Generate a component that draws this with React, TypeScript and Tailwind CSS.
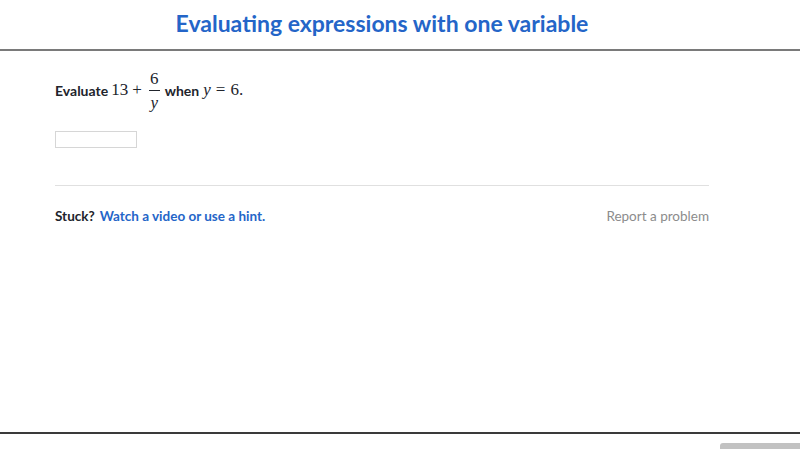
import React from 'react';

const lato = { fontFamily: 'Lato, "Open Sans", sans-serif' };
const serif = { fontFamily: '"Liberation Serif", "DejaVu Serif", serif' };

function Frac({ top, bottom }: { top: string; bottom: string }) {
  return (
    <span className="mx-[3px] inline-flex flex-col items-center align-middle leading-none">
      <span className="pb-[3px]">{top}</span>
      <span className="h-px w-[11px] bg-[#21242c]" />
      <span className="pt-[3px] italic">{bottom}</span>
    </span>
  );
}

export default function App() {
  return (
    <div className="relative h-[449px] w-[800px] overflow-hidden bg-white text-[#21242c]" style={lato}>
      {/* Title bar */}
      <div className="flex h-[51px] items-start justify-center border-b-2 border-[#7a7a7a] pr-[36px] pt-[6px]">
        <h1 className="text-[23px] font-bold text-[#2465c8]">Evaluating expressions with one variable</h1>
      </div>

      {/* Question */}
      <div className="px-[55px]">
        <div className="flex h-[78px] items-center text-[14px] font-bold">
          <span>Evaluate</span>
          <span className="ml-[3px] text-[17px] font-normal" style={serif}>
            13<span className="mx-[4px]">+</span>
          </span>
          <span className="text-[17px] font-normal" style={serif}>
            <Frac top="6" bottom="y" />
          </span>
          <span className="ml-[2px]">when</span>
          <span className="ml-[4px] text-[17px] font-normal" style={serif}>
            <i>y</i>
            <span className="mx-[5px]">=</span>6.
          </span>
        </div>

        <div className="mt-[2px] h-[17px] w-[82px] border border-[#d6d6d6]" />

        <div className="mt-[37px] w-[654px] border-t border-[#e0e0e0]" />

        <div className="flex w-[654px] items-center justify-between pt-[20px] text-[13.5px]">
          <div>
            <span className="font-bold">Stuck?</span>
            <span className="ml-[5px] font-bold text-[#2465c8]">Watch a video or use a hint.</span>
          </div>
          <span className="text-[#8c8c8c]">Report a problem</span>
        </div>
      </div>

      {/* Bottom line */}
      <div className="absolute left-0 top-[432px] h-[2px] w-full bg-[#3a3a3a]" />
      <div className="absolute right-0 top-[443px] h-[8px] w-[80px] rounded-tl-[3px] bg-[#c2c2c2]" />
    </div>
  );
}
